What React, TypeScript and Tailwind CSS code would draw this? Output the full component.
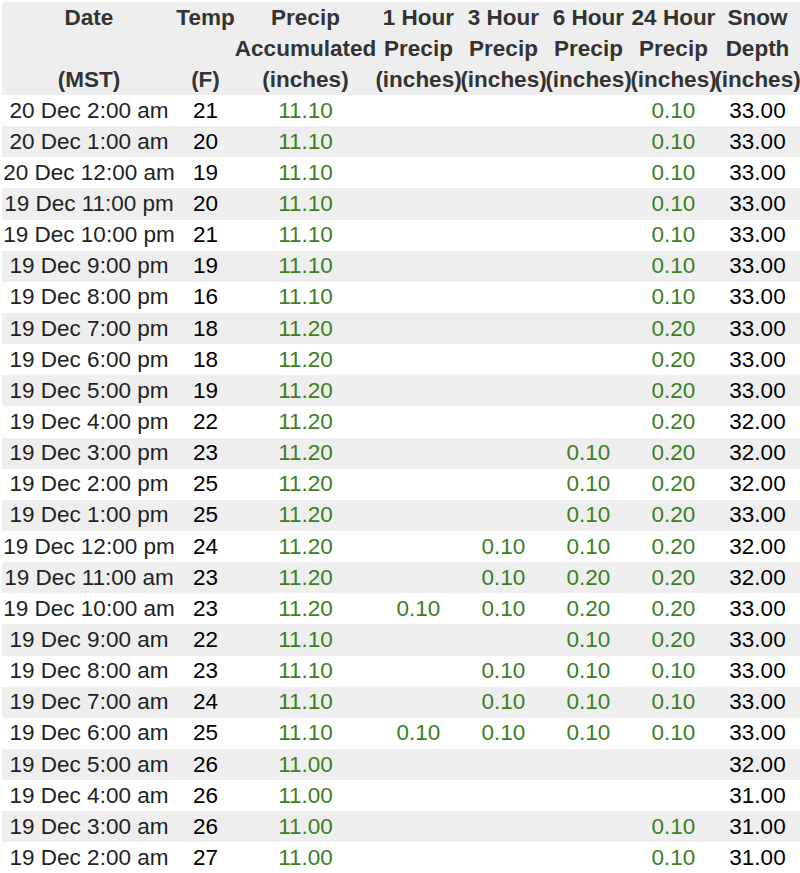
import React from "react";

type Row = [string, number, string, string, string, string, string, string];

const rows: Row[] = [
  ["20 Dec 2:00 am", 21, "11.10", "", "", "", "0.10", "33.00"],
  ["20 Dec 1:00 am", 20, "11.10", "", "", "", "0.10", "33.00"],
  ["20 Dec 12:00 am", 19, "11.10", "", "", "", "0.10", "33.00"],
  ["19 Dec 11:00 pm", 20, "11.10", "", "", "", "0.10", "33.00"],
  ["19 Dec 10:00 pm", 21, "11.10", "", "", "", "0.10", "33.00"],
  ["19 Dec 9:00 pm", 19, "11.10", "", "", "", "0.10", "33.00"],
  ["19 Dec 8:00 pm", 16, "11.10", "", "", "", "0.10", "33.00"],
  ["19 Dec 7:00 pm", 18, "11.20", "", "", "", "0.20", "33.00"],
  ["19 Dec 6:00 pm", 18, "11.20", "", "", "", "0.20", "33.00"],
  ["19 Dec 5:00 pm", 19, "11.20", "", "", "", "0.20", "33.00"],
  ["19 Dec 4:00 pm", 22, "11.20", "", "", "", "0.20", "32.00"],
  ["19 Dec 3:00 pm", 23, "11.20", "", "", "0.10", "0.20", "32.00"],
  ["19 Dec 2:00 pm", 25, "11.20", "", "", "0.10", "0.20", "32.00"],
  ["19 Dec 1:00 pm", 25, "11.20", "", "", "0.10", "0.20", "33.00"],
  ["19 Dec 12:00 pm", 24, "11.20", "", "0.10", "0.10", "0.20", "32.00"],
  ["19 Dec 11:00 am", 23, "11.20", "", "0.10", "0.20", "0.20", "32.00"],
  ["19 Dec 10:00 am", 23, "11.20", "0.10", "0.10", "0.20", "0.20", "33.00"],
  ["19 Dec 9:00 am", 22, "11.10", "", "", "0.10", "0.20", "33.00"],
  ["19 Dec 8:00 am", 23, "11.10", "", "0.10", "0.10", "0.10", "33.00"],
  ["19 Dec 7:00 am", 24, "11.10", "", "0.10", "0.10", "0.10", "33.00"],
  ["19 Dec 6:00 am", 25, "11.10", "0.10", "0.10", "0.10", "0.10", "33.00"],
  ["19 Dec 5:00 am", 26, "11.00", "", "", "", "", "32.00"],
  ["19 Dec 4:00 am", 26, "11.00", "", "", "", "", "31.00"],
  ["19 Dec 3:00 am", 26, "11.00", "", "", "", "0.10", "31.00"],
  ["19 Dec 2:00 am", 27, "11.00", "", "", "", "0.10", "31.00"],
];

// header lines per column: [line1, line2, line3]
const headers: [string, string, string][] = [
  ["Date", "", "(MST)"],
  ["Temp", "", "(F)"],
  ["Precip", "Accumulated", "(inches)"],
  ["1 Hour", "Precip", "(inches)"],
  ["3 Hour", "Precip", "(inches)"],
  ["6 Hour", "Precip", "(inches)"],
  ["24 Hour", "Precip", "(inches)"],
  ["Snow", "Depth", "(inches)"],
];

const cols = "grid grid-cols-[174px_59px_141px_85px_85px_85px_85px_83px]";

export default function App() {
  return (
    <div className="min-h-screen bg-white pt-[2px] pl-[2px] text-[22.5px] font-['Liberation_Sans',Arial,sans-serif]">
      {/* Header */}
      <div className={cn(cols, "bg-[#eeeeee] font-bold text-[#333333] leading-[31px]")}>
        {headers.map((h, i) => (
          <div key={i} className="flex flex-col items-center whitespace-nowrap">
            <div className="h-[31px]">{h[0]}</div>
            <div className="h-[31px]">{h[1]}</div>
            <div className="h-[31px]">{h[2]}</div>
          </div>
        ))}
      </div>

      {/* Rows */}
      {rows.map((r, idx) => (
        <div
          key={idx}
          className={cn(
            cols,
            "h-[31.15px] items-center text-center whitespace-nowrap leading-[28px]",
            idx % 2 === 1 ? "bg-[#eeeeee]" : "bg-white"
          )}
        >
          <div className="text-[#222222]">{r[0]}</div>
          <div className="text-black">{r[1]}</div>
          <div className="text-[#3b7f1e]">{r[2]}</div>
          <div className="text-[#3b7f1e]">{r[3]}</div>
          <div className="text-[#3b7f1e]">{r[4]}</div>
          <div className="text-[#3b7f1e]">{r[5]}</div>
          <div className="text-[#3b7f1e]">{r[6]}</div>
          <div className="text-black">{r[7]}</div>
        </div>
      ))}
    </div>
  );
}

function cn(...parts: (string | false | undefined)[]) {
  return parts.filter(Boolean).join(" ");
}
